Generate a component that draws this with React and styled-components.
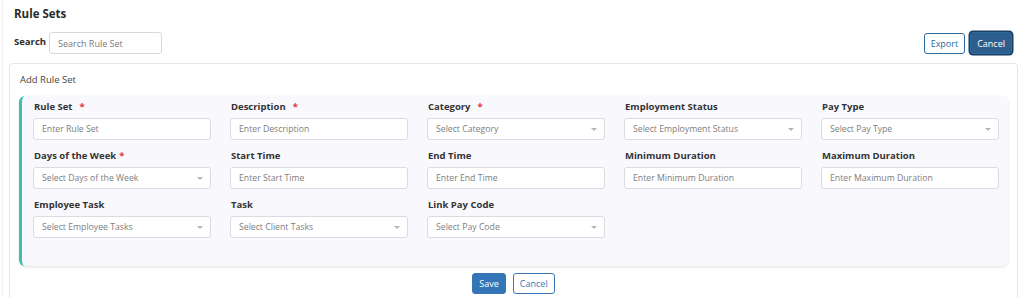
import React from "react";
import styled, { createGlobalStyle } from "styled-components";

const GlobalStyle = createGlobalStyle`
  body {
    margin: 0;
    background: #fff;
    font-family: "Open Sans", "Liberation Sans", sans-serif;
    color: #333;
  }
  * { box-sizing: border-box; }
`;

const fields = [
  { label: "Rule Set", req: true, ph: "Enter Rule Set" },
  { label: "Description", req: true, ph: "Enter Description" },
  { label: "Category", req: true, ph: "Select Category", select: true },
  { label: "Employment Status", ph: "Select Employment Status", select: true },
  { label: "Pay Type", ph: "Select Pay Type", select: true },
  { label: "Days of the Week", req: true, tight: true, ph: "Select Days of the Week", select: true },
  { label: "Start Time", ph: "Enter Start Time" },
  { label: "End Time", ph: "Enter End Time" },
  { label: "Minimum Duration", ph: "Enter Minimum Duration" },
  { label: "Maximum Duration", ph: "Enter Maximum Duration" },
  { label: "Employee Task", ph: "Select Employee Tasks", select: true },
  { label: "Task", ph: "Select Client Tasks", select: true },
  { label: "Link Pay Code", ph: "Select Pay Code", select: true },
];

function App() {
  return (
    <Page>
      <GlobalStyle />
      <Title>Rule Sets</Title>
      <TopBar>
        <SearchBox>
          <SearchLabel>Search</SearchLabel>
          <SearchInput placeholder="Search Rule Set" />
        </SearchBox>
        <Actions>
          <Button $variant="outline">Export</Button>
          <Button $variant="solid">Cancel</Button>
        </Actions>
      </TopBar>
      <Card>
        <CardTitle>Add Rule Set</CardTitle>
        <Panel>
          <Grid>
            {fields.map((f) => (
              <Field key={f.label}>
                <Label>
                  {f.label}
                  {f.req && <Star $tight={f.tight}>*</Star>}
                </Label>
                {f.select ? (
                  <SelectBox>
                    <span>{f.ph}</span>
                    <Caret />
                  </SelectBox>
                ) : (
                  <TextInput placeholder={f.ph} />
                )}
              </Field>
            ))}
          </Grid>
        </Panel>
        <Footer>
          <SmallButton $variant="solid">Save</SmallButton>
          <SmallButton $variant="outline">Cancel</SmallButton>
        </Footer>
      </Card>
    </Page>
  );
}

export default App;

const Page = styled.div`
  padding: 6px 6px 0 6px;
  height: 298px;
  overflow: hidden;
  border-left: 1px solid #f0f0f0;
  margin-left: 2px;
`;

const Title = styled.div`
  font-size: 11.5px;
  font-weight: 700;
  color: #2b2b2b;
  padding-left: 5px;
  height: 16px;
  line-height: 16px;
`;

const TopBar = styled.div`
  display: flex;
  justify-content: space-between;
  align-items: center;
  margin-top: 10px;
  padding-left: 5px;
`;

const SearchBox = styled.div`
  display: flex;
  align-items: center;
  gap: 3px;
`;

const SearchLabel = styled.span`
  font-size: 9.5px;
  font-weight: 700;
  color: #2b2b2b;
  margin-top: -4px;
`;

const SearchInput = styled.input`
  width: 113px;
  height: 22px;
  border: 1px solid #d6d9de;
  border-radius: 3px;
  padding: 0 8px;
  font-family: inherit;
  font-size: 9px;
  outline: none;
  &::placeholder { color: #7a7a7a; }
`;

const Actions = styled.div`
  display: flex;
  align-items: center;
  gap: 5px;
  margin-right: 6px;
`;

const Button = styled.button`
  font-family: inherit;
  font-size: 9px;
  height: 21px;
  padding: 0 6px;
  border-radius: 3px;
  cursor: pointer;
  border: 1px solid #2c6aa0;
  ${(p) =>
    p.$variant === "solid"
      ? `background: #2d5f8e; color: #fff; box-shadow: 0 0 0 1.5px #1d3f62; height: 22px;`
      : `background: #fff; color: #2c6aa0;`}
`;

const Card = styled.div`
  margin-top: 9px;
  border: 1px solid #e6e7ea;
  border-radius: 4px;
  padding: 9px 9px 20px 9px;
  background: #fff;
`;

const CardTitle = styled.div`
  font-size: 9.5px;
  color: #444;
  margin-left: 1px;
  height: 14px;
  line-height: 14px;
`;

const Panel = styled.div`
  margin-top: 9px;
  background: #f8f8fd;
  border-left: 3px solid #3dbfae;
  border-radius: 6px;
  box-shadow: 0 1px 3px rgba(0, 0, 0, 0.12);
  padding: 4px 9px 28px 11px;
`;

const Grid = styled.div`
  display: grid;
  grid-template-columns: repeat(5, 178px);
  column-gap: 19px;
  row-gap: 9px;
`;

const Field = styled.div`
  display: flex;
  flex-direction: column;
  gap: 4px;
`;

const Label = styled.div`
  font-size: 9.5px;
  font-weight: 700;
  color: #333;
  height: 14px;
  line-height: 14px;
  padding-left: 1px;
`;

const Star = styled.span`
  color: #e2373f;
  margin-left: ${(p) => (p.$tight ? "3px" : "7px")};
`;

const inputBase = `
  height: 22px;
  border: 1px solid #d9dce1;
  border-radius: 3px;
  background: #fff;
  font-size: 8.7px;
  padding: 0 8px;
`;

const TextInput = styled.input`
  ${inputBase}
  width: 100%;
  font-family: inherit;
  outline: none;
  &::placeholder { color: #7d7d7d; }
`;

const SelectBox = styled.div`
  ${inputBase}
  display: flex;
  align-items: center;
  justify-content: space-between;
  color: #7d7d7d;
  padding-right: 7px;
`;

const Caret = styled.span`
  width: 0;
  height: 0;
  border-left: 3px solid transparent;
  border-right: 3px solid transparent;
  border-top: 3px solid #b5b5b5;
`;

const Footer = styled.div`
  display: flex;
  justify-content: center;
  gap: 7px;
  margin-top: 7px;
`;

const SmallButton = styled.button`
  font-family: inherit;
  font-size: 9px;
  height: 21px;
  padding: 0 6px;
  border-radius: 3px;
  border: 1px solid #3a78b5;
  ${(p) =>
    p.$variant === "solid"
      ? `background: #3375b6; color: #fff;`
      : `background: #fff; color: #3a78b5;`}
`;
